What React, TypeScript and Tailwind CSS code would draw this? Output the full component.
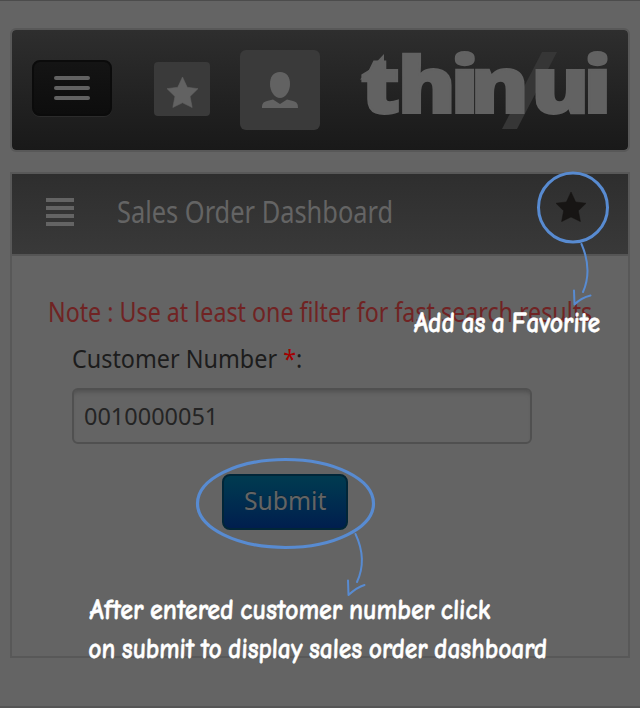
import { useLayoutEffect, useRef } from "react";
import type { ReactNode } from "react";

/* Single line of text, condensed or expanded to an exact width. */
function FitText({ width, className, children }: { width: number; className: string; children: ReactNode }) {
  const ref = useRef<HTMLSpanElement>(null);
  useLayoutEffect(() => {
    const el = ref.current;
    if (el) el.style.transform = `scaleX(${width / el.offsetWidth})`;
  }, [width]);
  return (
    <span className="block" style={{ width }}>
      <span ref={ref} className={"inline-block origin-left whitespace-nowrap " + className}>
        {children}
      </span>
    </span>
  );
}

const STAR = "M16 0 L20.9 10.6 L32 12 L23.8 20 L26 31.5 L16 26.6 L6 31.5 L8.2 20 L0 12 L11.1 10.6 Z";

function Star({ className }: { className: string }) {
  return (
    <svg viewBox="0 0 32 32" className={className} fill="currentColor" stroke="currentColor" strokeWidth="0.6" strokeLinejoin="round">
      <path d={STAR} />
    </svg>
  );
}

function Logo() {
  return (
    <svg viewBox="352 30 264 120" className="h-[120px] w-[264px]" fill="#626262">
      <path d="M542 52H557L517 129H502Z" fill="#363636" />
      <path d="M360 79.5L384 54V79.5Z" />
      <text
        transform="scale(1.12 1)"
        x="321.6 354.9 402.2 420 474.2 520.7"
        y="113"
        fontFamily="'Open Sans', sans-serif"
        fontWeight="800"
        fontSize="78"
        stroke="#626262"
        strokeWidth="2"
      >
        thinui
      </text>
    </svg>
  );
}

function Header() {
  return (
    <header className="flex h-[124px] rounded-md border-2 border-[#585858] bg-gradient-to-b from-[#2e2e2e] to-[#191919] bg-clip-padding">
      <button className="mt-[30px] ml-5 flex h-14 w-20 flex-col items-center justify-center gap-1.5 rounded-lg border-2 border-[#0b0b0b] bg-gradient-to-b from-[#141414] to-[#0d0d0d] shadow-[0_1px_0_#2b2b2b]">
        <i className="h-1 w-9 rounded-sm bg-[#626262]" />
        <i className="h-1 w-9 rounded-sm bg-[#626262]" />
        <i className="h-1 w-9 rounded-sm bg-[#626262]" />
      </button>
      <button className="mt-8 ml-[42px] flex h-[54px] w-14 justify-center rounded bg-[#3a3a3a] pt-[15px] text-[#626262]">
        <Star className="size-[31px]" />
      </button>
      <button className="mt-5 ml-[30px] flex h-20 w-20 justify-center rounded-md bg-[#3a3a3a] pt-[22px]">
        <svg viewBox="0 0 36 36" className="size-9" fill="#626262">
          <path d="M18 0C25 0 28 5 28 12C28 20 23 26 18 26S8 20 8 12C8 5 11 0 18 0Z" />
          <path d="M0 36C0 32 1 30 5 29L11 27.5L18 32L25 27.5L31 29C35 30 36 32 36 36Z" />
        </svg>
      </button>
      <div className="ml-8">
        <Logo />
      </div>
    </header>
  );
}

function Panel() {
  return (
    <section className="mt-5 h-[486px] border-2 border-[#585858] font-['Noto_Sans',sans-serif]">
      <div className="flex h-[82px] border-b-2 border-[#555555] bg-gradient-to-b from-[#2e2e2e] to-[#393939] text-[#646464]">
        <div className="mt-6 ml-[34px] flex w-7 flex-col gap-1">
          <i className="h-1 bg-[#646464]" />
          <i className="h-1 bg-[#646464]" />
          <i className="h-1 bg-[#646464]" />
          <i className="h-1 bg-[#646464]" />
        </div>
        <h1 className="mt-[17px] ml-[43px]">
          <FitText width={276} className="text-[31px] leading-10">Sales Order Dashboard</FitText>
        </h1>
        <Star className="mt-[18px] ml-[163px] size-[30px] text-[#171514]" />
      </div>
      <div className="pt-9 pl-[36px]">
        <FitText width={544} className="text-[27px] leading-10 text-[#702323]">Note : Use at least one filter for fast search results</FitText>
      </div>
      <form className="mt-[6px] ml-[60px] w-[460px]" onSubmit={(e) => e.preventDefault()}>
        <label className="block">
          <FitText width={230} className="text-[25px] leading-10 text-[#1c1c1c]">
            Customer Number <span className="text-[#a30000]">*</span>:
          </FitText>
        </label>
        <div className="mt-[10px] h-14 rounded-md border-2 border-[#505050] pl-2.5 shadow-[inset_0_5px_4px_-3px_#505050]">
          <FitText width={134} className="text-[24px] leading-[52px] text-[#242424]">0010000051</FitText>
        </div>
        <button className="mt-[30px] ml-[150px] block h-14 w-[126px] rounded-lg border-2 border-[#012638] bg-gradient-to-b from-[#003b50] to-[#001e4e] pb-[3px] pl-5 text-left">
          <FitText width={82} className="text-[25px] leading-[49px] text-[#646464] [text-shadow:0_-1px_0_#0a2838]">Submit</FitText>
        </button>
      </form>
    </section>
  );
}

const HAND =
  "font-['Comic_Neue','Open_Sans',sans-serif] font-bold text-[29px] leading-[39px] text-white [word-spacing:-3px] [-webkit-text-stroke:0.5px_white]";

function Annotations() {
  return (
    <div className="pointer-events-none absolute inset-x-0 -top-px h-[708px]">
      <svg viewBox="0 0 640 708" className="absolute inset-0 h-[708px] w-[640px]" fill="none" stroke="#588bd1" strokeLinecap="round" strokeLinejoin="round">
        <circle cx="573" cy="207.5" r="34.5" strokeWidth="3" />
        <ellipse cx="285.5" cy="503.5" rx="88" ry="44" strokeWidth="3.2" />
        <g strokeWidth="2">
          <path d="M581.5 244C588 259 590 276 583 292" />
          <path d="M574 290.5L574.5 304.5C580 299 584 297 590.5 295.5" />
          <path d="M355.5 534C363 550 364 567 357 582" />
          <path d="M348 580.5L348.5 595C354 590 358 587 364.5 585" />
        </g>
      </svg>
      <div className="absolute top-[303px] left-[414px] -skew-x-2">
        <FitText width={186} className={HAND}>Add as a Favorite</FitText>
      </div>
      <div className="absolute top-[590px] left-[89px] -skew-x-2">
        <FitText width={401} className={HAND}>After entered customer number click</FitText>
        <FitText width={459} className={HAND}>on submit to display sales order dashboard</FitText>
      </div>
    </div>
  );
}

export default function App() {
  return (
    <main className="relative h-[708px] w-[640px] overflow-hidden border-t border-b-2 border-t-[#4c4c4c] border-b-[#555555] bg-[#646464] px-2.5 pt-[27px]">
      <Header />
      <Panel />
      <Annotations />
    </main>
  );
}
